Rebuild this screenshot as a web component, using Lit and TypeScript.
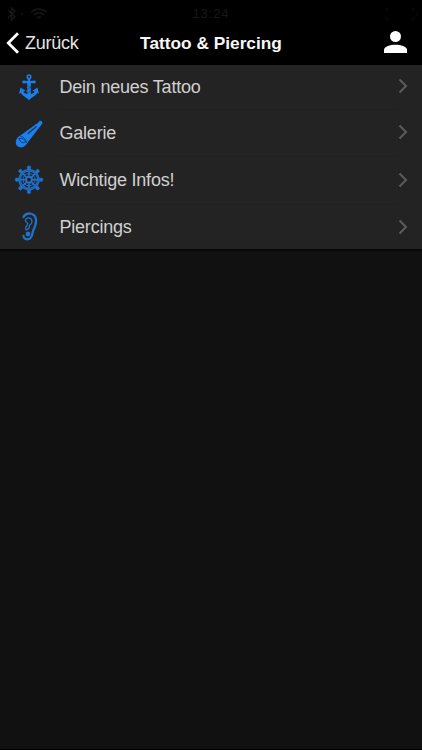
import { LitElement, html, css, svg } from "lit";
import { customElement } from "lit/decorators.js";

const spokes = [0, 45, 90, 135, 180, 225, 270, 315];

const anchor = svg`
  <circle cx="15" cy="3.8" r="1.8" fill="none" stroke="currentColor" stroke-width="1.5"/>
  <path d="M9 7.6Q7.2 9 9 10.6L13.2 10.1V21Q10.3 20.6 9.2 18.8L11.6 17.7L6.5 14.4L5.1 20.8L7 20C9 23.8 12.4 23.8 15 27.3C17.6 23.8 21 23.8 23 20L24.9 20.8L23.5 14.4L18.4 17.7L20.8 18.8Q19.7 20.6 16.8 21V10.1L21 10.6Q22.8 9 21 7.6L16.2 8V5.5H13.8V8Z" fill="currentColor"/>
  <path d="M13.4 12.5L16.6 14.3Q13.2 16 12.2 18.2L13.3 20.2M17 17L14 20.3" fill="none" stroke="#174e91" stroke-width=".8"/>`;

const telescope = svg`
  <path d="M25.6 1.8Q27.8 1.2 28.5 3.9L27.6 5.5L13.3 24Q11.2 28 7.2 28.4Q2.1 28.3 1.8 23.5Q1.6 19.5 5.6 17L24.4 3.5Z" fill="currentColor"/>
  <path d="M22.3 7.2L13.8 14.2L14.4 14.8L22.7 7.8Z" fill="#1c3555" stroke="#1c3555" stroke-width=".7"/>
  <path d="M6.5 17.2Q12 19 12.6 23.8M5 19.5Q10 18.5 11.8 23Q6.7 25.4 5 19.5Z" fill="none" stroke="#153f77" stroke-width="1"/>`;

const wheel = svg`
  <g fill="none" stroke="currentColor">
    <circle cx="15" cy="14.7" r="9.3" stroke-width="2.7"/>
    <circle cx="15" cy="14.7" r="6.1" stroke-width="1"/>
    <circle cx="15" cy="14.7" r="3" stroke-width="2"/>
    ${spokes.map(a => svg`<g transform="rotate(${a} 15 14.7)">
      <path d="M15 11.2V4" stroke-width="1.6"/>
      <path d="M14 5.2L13.3 2.2Q13.3.9 15 .9Q16.7.9 16.7 2.2L16 5.2Z" fill="currentColor" stroke-width=".6"/>
    </g>`)}
  </g>
  <circle cx="15" cy="14.7" r="9.2" fill="none" stroke="#1c4d88" stroke-width=".6"/>`;

const ear = svg`
  <g fill="none" stroke="currentColor" stroke-linecap="round">
    <path d="M9.5 5C12 .4 19.8 0 21.7 6C23.2 11.2 20.6 14.8 19.4 18C18 21 18.7 26.4 14.3 27.2C11 27.7 9.6 25.8 9.5 24" stroke-width="2.3"/>
    <path d="M11.3 8.2C12.6 4.5 17.8 5.4 18 9.4C18.1 12.3 15.6 12 15.4 14.3C15.7 16.4 14.1 17.6 11.8 17.8M11.3 8.2C11 10.5 15 10.3 13.5 12.8C12.5 14.2 10.7 15 11.8 17.4" stroke-width="1.3"/>
  </g>
  <circle cx="14" cy="22" r="2.4" fill="currentColor"/>`;

const items = [
  { label: "Dein neues Tattoo", icon: anchor, kind: "anchor" },
  { label: "Galerie", icon: telescope, kind: "telescope" },
  { label: "Wichtige Infos!", icon: wheel, kind: "wheel" },
  { label: "Piercings", icon: ear, kind: "ear" },
];

@customElement("app-root")
export class AppRoot extends LitElement {
  static styles = css`
    :host {
      display: flex;
      flex-direction: column;
      box-sizing: border-box;
      height: 750px;
      overflow: hidden;
      background: #111;
      border-bottom: 1px solid #030103;
      font-family: "Liberation Sans", Arial, sans-serif;
      color: #d0d0d0;
    }
    header { background: #000; height: 65px; flex: none; }
    .status {
      height: 27px;
      display: grid;
      grid-template-columns: 1fr 1fr 1fr;
      align-items: center;
      color: #181818;
      font-size: 13px;
      letter-spacing: 0.9px;
    }
    .status svg { display: block; margin-left: 5px; }
    .status .battery { justify-self: end; margin: 0 3px 0 0; }
    .time { text-align: center; }
    .nav {
      height: 32px;
      display: grid;
      grid-template-columns: 110px 1fr 110px;
      align-items: center;
    }
    .back { display: flex; align-items: center; gap: 5px; padding-left: 6px; font-size: 18px; letter-spacing: -0.25px; color: #e4e4e4; }
    .title { text-align: center; color: #f7f7f7; font-weight: 700; font-size: 17.3px; white-space: nowrap; }
    .user { justify-self: end; margin: 0 15px 2px 0; }
    svg { display: block; flex: none; }
    .list {
      flex: none;
      height: 184px;
      display: grid;
      grid-template-rows: 45px 47px 48px 44px;
      background: #232323;
      border-bottom: 2px solid #080808;
    }
    .row { display: flex; align-items: center; padding: 0 14px 0 13.5px; }
    .label { flex: 1; align-self: stretch; display: flex; align-items: center; margin-left: 16px; font-size: 18px; letter-spacing: -0.22px; border-bottom: 1px solid #202020; box-sizing: border-box; }
    .row:last-child .label { border-bottom: 0; }
    .icon { color: #1b7fee; }
    .wheel, .ear { color: #2072cd; }
    .wheel { margin-bottom: 2px; }
    .chevron { margin-top: -3px; }
    .row:last-child .chevron { margin-top: -1px; }
  `;

  render() {
    return html`
      <header>
        <div class="status">
          <svg width="44" height="16" viewBox="0 0 44 16" fill="none" stroke="#171717"><path d="M3 4L10 11L6.5 14V2L10 5L3 12M26 6Q34 0 42 6M29 9Q34 5 39 9M32 12Q34 10 36 12" stroke-width="1.5"/><circle cx="17" cy="8" r=".7"/></svg>
          <span class="time">13:24</span>
          <svg class="battery" width="34" height="15" viewBox="0 0 34 15" fill="none" stroke="#140b0b"><path d="M3 3H1V5M1 11V13H3M27 3H29V5M29 11V13H27M32 6V10"/></svg>
        </div>
        <div class="nav">
          <div class="back">
            <svg width="14" height="22" viewBox="0 0 14 22"><path d="M12 1.2L2.3 11L12 20.8" fill="none" stroke="#fff" stroke-width="2.8"/></svg>
            <span>Zurück</span>
          </div>
          <div class="title">Tattoo &amp; Piercing</div>
          <svg class="user" width="23" height="22" viewBox="0 0 23 22" fill="#fff"><ellipse cx="11.5" cy="5.5" rx="5.5" ry="5.5"/><path d="M0 22V18.6C1 12 22 12 23 18.6V22Z"/></svg>
        </div>
      </header>
      <div class="list">
        ${items.map(i => html`<div class="row">
          <svg class="icon ${i.kind}" width="30" height="30" viewBox="0 0 30 30">${i.icon}</svg>
          <span class="label">${i.label}</span>
          <svg class="chevron" width="10" height="16" viewBox="0 0 10 16"><path d="M1.5 1.5L8 8L1.5 14.5" fill="none" stroke="#5c5c5c" stroke-width="2"/></svg>
        </div>`)}
      </div>`;
  }
}
